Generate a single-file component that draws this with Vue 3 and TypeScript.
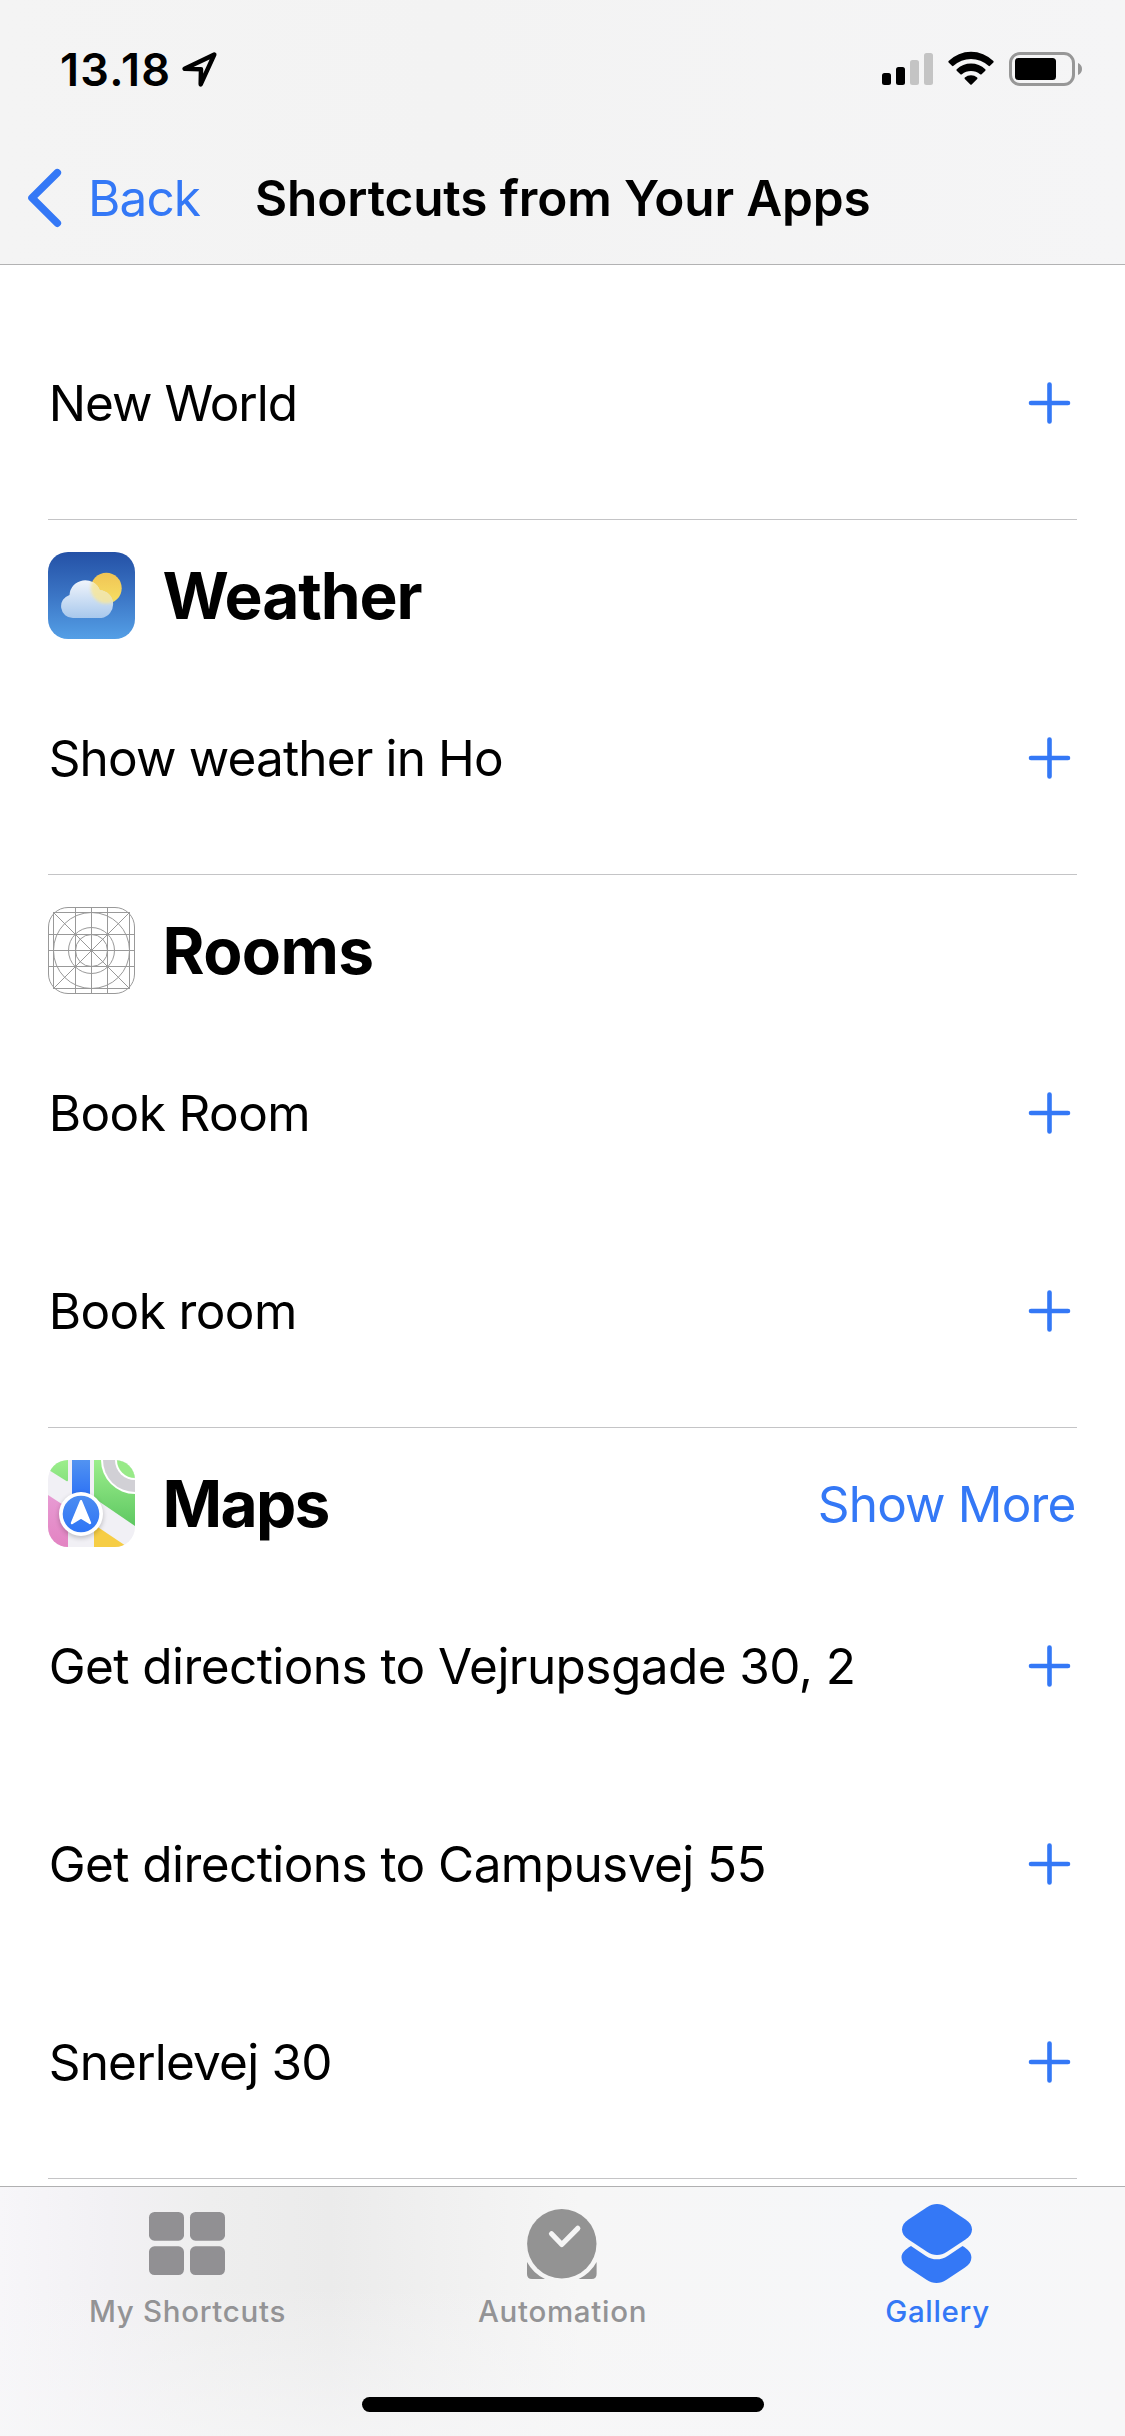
<script setup lang="ts">
interface Item {
  text: string
  /** letter-spacing in px */
  tracking: number
}

interface Section {
  app?: 'weather' | 'rooms' | 'maps'
  title?: string
  tracking?: number
  more?: boolean
  items: Item[]
}

const sections: Section[] = [
  { items: [{ text: 'New World', tracking: -1 }] },
  {
    app: 'weather',
    title: 'Weather',
    tracking: -1.1,
    items: [{ text: 'Show weather in Ho', tracking: -0.85 }],
  },
  {
    app: 'rooms',
    title: 'Rooms',
    tracking: -0.6,
    items: [
      { text: 'Book Room', tracking: -0.6 },
      { text: 'Book room', tracking: -0.6 },
    ],
  },
  {
    app: 'maps',
    title: 'Maps',
    tracking: -1.7,
    more: true,
    items: [
      { text: 'Get directions to Vejrupsgade 30, 2', tracking: -0.57 },
      { text: 'Get directions to Campusvej 55', tracking: -0.57 },
      { text: 'Snerlevej 30', tracking: -0.8 },
    ],
  },
]

const gridLines: number[] = [5.5, 27.5, 43.5, 59.5, 81.5]
</script>

<template>
  <div class="screen">
    <header class="top">
      <div class="status">
        <div class="clock">
          <span class="time">13.18</span>
          <svg class="loc" width="36" height="36" viewBox="0 0 36 36">
            <path d="M32.300 3.600 L2.600 17.700 L19 18.200 L18.700 33.400 Z" fill="none" stroke="#000" stroke-width="4.500" stroke-linejoin="round" />
          </svg>
        </div>
        <svg class="indicators" width="202" height="36" viewBox="0 0 202 36">
          <rect x="1" y="22" width="9" height="12" rx="2.5" />
          <rect x="15" y="16" width="9" height="18" rx="2.5" />
          <rect x="29" y="9" width="9" height="25" rx="2.5" fill="#c4c4c4" />
          <rect x="43" y="2" width="9" height="32" rx="2.5" fill="#c4c4c4" />
          <g transform="translate(67 1)">
            <path d="M0.6 9 Q0 9.800 0.600 10.400 L4 13.800 Q4.700 14.500 5.500 13.800 A25.600 25.600 0 0 1 40.500 13.800 Q41.300 14.500 42 13.800 L45.400 10.400 Q46 9.800 45.400 9 A32 32 0 0 0 0.600 9 Z" />
            <path d="M8.700 17.300 Q8.100 18 8.700 18.700 L12.400 22.200 Q13.100 22.800 13.900 22.200 A14.500 14.500 0 0 1 32.100 22.200 Q32.900 22.800 33.600 22.200 L37.300 18.700 Q37.900 18 37.300 17.300 A20.800 20.800 0 0 0 8.700 17.300 Z" />
            <path d="M16.800 25.500 Q16.200 26.200 16.800 26.900 L22.300 32.400 Q23 33 23.700 32.400 L29.200 26.900 Q29.800 26.200 29.200 25.500 A10 10 0 0 0 16.800 25.500 Z" />
          </g>
          <rect x="129.500" y="2.500" width="63" height="31" rx="9.500" fill="none" stroke="#979797" stroke-width="3" />
          <rect x="134" y="7" width="41" height="22" rx="3.500" />
          <path d="M197 12 C199.700 13.200 201 15.300 201 18 C201 20.700 199.700 22.800 197 24 Z" fill="#979797" />
        </svg>
      </div>
      <nav class="nav">
        <svg class="chevron" width="34" height="58" viewBox="0 0 34 58">
          <path d="M29.300 3.700 L4 28.900 L29.300 54.100" fill="none" stroke="#3478f6" stroke-width="7.600" stroke-linecap="round" stroke-linejoin="round" />
        </svg>
        <span class="back">Back</span>
        <h1 class="title">Shortcuts from Your Apps</h1>
      </nav>
    </header>

    <main class="list">
      <section v-for="(s, i) in sections" :key="i" class="section">
        <div v-if="s.title" class="head">
          <svg v-if="s.app === 'weather'" width="87" height="87" viewBox="0 0 87 87">
            <defs>
              <linearGradient id="sky" x1="0" y1="0" x2="0" y2="1">
                <stop offset="0" stop-color="#2451a6" />
                <stop offset="0.500" stop-color="#3b75c5" />
                <stop offset="1" stop-color="#549fe6" />
              </linearGradient>
              <linearGradient id="sun" x1="0" y1="0" x2="0" y2="1">
                <stop offset="0" stop-color="#f0c455" />
                <stop offset="1" stop-color="#f7e063" />
              </linearGradient>
              <linearGradient id="cloud" x1="0" y1="0" x2="0" y2="1">
                <stop offset="0" stop-color="#f3f6fc" />
                <stop offset="1" stop-color="#a6c7ec" />
              </linearGradient>
              <clipPath id="cloud-clip">
                <path d="M24.900 66 A11.800 11.800 0 0 1 21.500 42.900 A15.700 15.700 0 0 1 51.800 38.200 A14 14 0 0 1 53.400 66 Z" />
              </clipPath>
              <filter id="glow" x="-30%" y="-30%" width="160%" height="160%">
                <feGaussianBlur stdDeviation="1.600" />
              </filter>
            </defs>
            <rect width="87" height="87" rx="20" fill="url(#sky)" />
            <circle cx="58.300" cy="36.200" r="15.400" fill="url(#sun)" />
            <g clip-path="url(#cloud-clip)">
              <rect x="10" y="27" width="60" height="40" fill="url(#cloud)" />
              <circle cx="58.300" cy="36.200" r="15.400" fill="#f6e69a" opacity="0.850" filter="url(#glow)" />
            </g>
          </svg>
          <svg v-else-if="s.app === 'rooms'" width="87" height="87" viewBox="0 0 87 87" fill="none" stroke="#999">
            <rect x="0.500" y="0.500" width="86" height="86" rx="19.500" fill="#fff" />
            <path v-for="g in gridLines" :key="g" :d="`M${g} ${g === 5.5 || g === 81.5 ? 5 : 0} V${g === 5.5 || g === 81.5 ? 82 : 87} M${g === 5.5 || g === 81.5 ? 5 : 0} ${g} H${g === 5.5 || g === 81.5 ? 82 : 87}`" />
            <path d="M5.500 5.500 L81.500 81.500 M81.500 5.500 L5.500 81.500" />
            <circle cx="43.500" cy="43.500" r="38" />
            <circle cx="43.500" cy="43.500" r="23" />
            <circle cx="43.500" cy="43.500" r="16" />
          </svg>
          <svg v-else width="87" height="87" viewBox="0 0 87 87">
            <defs>
              <clipPath id="tile"><rect width="87" height="87" rx="20" /></clipPath>
              <linearGradient id="park" gradientUnits="userSpaceOnUse" x1="0" y1="0" x2="0" y2="64">
                <stop offset="0" stop-color="#9cee8c" />
                <stop offset="1" stop-color="#60c963" />
              </linearGradient>
              <linearGradient id="route" gradientUnits="userSpaceOnUse" x1="0" y1="0" x2="0" y2="34">
                <stop offset="0" stop-color="#5293f1" />
                <stop offset="1" stop-color="#2f74f5" />
              </linearGradient>
              <linearGradient id="puck" x1="0" y1="0" x2="0" y2="1">
                <stop offset="0" stop-color="#4c8df1" />
                <stop offset="1" stop-color="#2f75f6" />
              </linearGradient>
              <linearGradient id="pink" x1="0" y1="0" x2="0" y2="1">
                <stop offset="0" stop-color="#e79bd3" />
                <stop offset="1" stop-color="#e383c2" />
              </linearGradient>
              <filter id="soft" x="-40%" y="-40%" width="180%" height="180%">
                <feGaussianBlur stdDeviation="2.500" />
              </filter>
            </defs>
            <g clip-path="url(#tile)">
              <rect width="87" height="87" fill="#f1f0f5" />
              <path d="M0 0 H20 V20 Q20 21.800 18.400 20.900 L0 9.500 Z" fill="url(#park)" />
              <path d="M46 0 H87 V66 L46 38 Z" fill="url(#park)" />
              <circle cx="87" cy="0" r="34" fill="#fff" />
              <circle cx="87" cy="0" r="32" fill="#d1d0d5" />
              <circle cx="87" cy="0" r="20" fill="#fff" />
              <circle cx="87" cy="0" r="18" fill="#98ea88" />
              <path d="M0 35 L20 48 V87 H0 Z" fill="url(#pink)" />
              <path d="M46 64.500 L79.500 87 H46 Z" fill="#f6cd45" />
              <rect x="24" width="18" height="40" fill="url(#route)" />
              <circle cx="33" cy="56" r="22" fill="#000" opacity="0.220" filter="url(#soft)" />
              <circle cx="33" cy="54" r="22" fill="#fff" />
              <circle cx="33" cy="54" r="18.300" fill="url(#puck)" />
              <path d="M33 41.200 L42 63 L33 57.400 L24 63 Z" fill="#fff" stroke="#fff" stroke-width="2.400" stroke-linejoin="round" />
            </g>
          </svg>
          <h2 class="app-name" :style="{ letterSpacing: `${s.tracking}px` }">{{ s.title }}</h2>
          <span v-if="s.more" class="more">Show More</span>
        </div>
        <div v-for="item in s.items" :key="item.text" class="row">
          <span class="label" :style="{ letterSpacing: `${item.tracking}px` }">{{ item.text }}</span>
          <svg class="plus" width="43" height="42" viewBox="0 0 43 42">
            <path d="M21.500 2.500 V39.500 M3 21 H40" stroke="#3478f6" stroke-width="4.600" stroke-linecap="round" />
          </svg>
        </div>
      </section>
      <div class="rule"></div>
    </main>

    <footer class="tabs">
      <div class="tab-row">
        <div class="tab">
          <svg width="77" height="80" viewBox="0 0 77 80" fill="#919093">
            <rect x="0" y="8" width="35" height="28.700" rx="5.500" />
            <rect x="41" y="8" width="35" height="28.700" rx="5.500" />
            <rect x="0" y="42.300" width="35" height="28.700" rx="5.500" />
            <rect x="41" y="42.300" width="35" height="28.700" rx="5.500" />
          </svg>
          <span class="tab-label">My Shortcuts</span>
        </div>
        <div class="tab">
          <svg width="71" height="80" viewBox="0 0 71 80" fill="#939393">
            <circle cx="34.800" cy="39.700" r="34.700" />
            <path d="M0 58 V70 Q0 75 5 75 H18 A39.500 39.500 0 0 1 0 58 Z" />
            <path d="M69.600 58 V70 Q69.600 75 64.600 75 H51.600 A39.500 39.500 0 0 0 69.600 58 Z" />
            <path d="M24.500 29.800 L34.800 40.500 L50.800 24.300" fill="none" stroke="#f5f5f5" stroke-width="5.200" stroke-linecap="round" stroke-linejoin="round" />
          </svg>
          <span class="tab-label">Automation</span>
        </div>
        <div class="tab active">
          <svg width="71" height="80" viewBox="0 0 71 80" fill="#3478f6">
            <path d="M45 3.300 L63.500 15.500 C67.800 18.400 70 21.500 70 25.500 C70 29.500 67.800 32.600 63.500 35.500 L45 47.700 C41.500 50 38.500 51 35 51 C31.500 51 28.500 50 25 47.700 L6.500 35.500 C2.200 32.600 0 29.500 0 25.500 C0 21.500 2.200 18.400 6.500 15.500 L25 3.300 C28.500 1 31.500 0 35 0 C38.500 0 41.500 1 45 3.300 Z" />
            <path d="M9 42 L23.500 51.700 C27.500 54.300 31 55.300 34.800 55.300 C38.600 55.300 42 54.300 46 51.700 L60.500 42 C66.500 45.500 69.400 49 69.400 53.500 C69.400 57.500 67.300 60.600 63 63.500 L44.500 75.700 C41 78 38 79 34.500 79 C31 79 28 78 24.500 75.700 L6 63.500 C1.700 60.600 -0.500 57.500 -0.500 53.500 C-0.500 49 3 45.500 9 42 Z" />
          </svg>
          <span class="tab-label">Gallery</span>
        </div>
      </div>
      <div class="home"></div>
    </footer>
  </div>
</template>

<style>
body {
  margin: 0;
  background: #fff;
}
</style>

<style scoped>
.screen {
  width: 1125px;
  height: 2436px;
  display: flex;
  flex-direction: column;
  overflow: hidden;
  background: #fff;
  color: #000;
  font-family: Inter, "Liberation Sans", sans-serif;
  white-space: nowrap;
}
svg {
  display: block;
  flex: none;
  overflow: visible;
}
.top {
  box-sizing: border-box;
  height: 265px;
  flex: none;
  display: flex;
  flex-direction: column;
  background: linear-gradient(90deg, #f4f4f4, #f3f3f3 40%, #f5f5f6);
  border-bottom: 1px solid #b2b2b3;
}
.status {
  height: 132px;
  box-sizing: border-box;
  padding: 6px 42px 0 60px;
  display: flex;
  align-items: center;
  justify-content: space-between;
}
.clock {
  display: flex;
  align-items: center;
}
.time {
  width: 122px;
  font-size: 45px;
  font-weight: 600;
  letter-spacing: 1.300px;
}
.nav {
  height: 132px;
  display: flex;
  align-items: center;
  padding-left: 28px;
}
.back {
  margin-left: 26px;
  width: 167px;
  font-size: 49.500px;
  letter-spacing: -0.900px;
  color: #3478f6;
}
.title {
  margin: 0;
  font-size: 49.500px;
  font-weight: 600;
  letter-spacing: -0.140px;
}
.list {
  flex: 1;
  padding: 56px 48px 0;
}
.section + .section {
  border-top: 1px solid #c4c4c6;
}
.head {
  box-sizing: border-box;
  height: 156px;
  padding: 0 1.500px 5px 0;
  display: flex;
  align-items: center;
}
.app-name {
  flex: 1;
  margin: 0 0 0 27.500px;
  font-size: 64px;
  font-weight: 700;
}
.more {
  font-size: 49.500px;
  letter-spacing: -0.850px;
  color: #3478f6;
}
.row {
  box-sizing: border-box;
  height: 198px;
  padding: 0 6px 35px 0.700px;
  display: flex;
  align-items: center;
  justify-content: space-between;
}
.label {
  font-size: 49.500px;
}
.rule {
  height: 1px;
  background: #c4c4c6;
}
.tabs {
  box-sizing: border-box;
  height: 250px;
  flex: none;
  border-top: 1px solid #b0b0b1;
  background:
    linear-gradient(180deg, rgba(247, 247, 248, 0) 40%, rgba(247, 247, 248, 0.700)),
    linear-gradient(90deg, #f7f6f9 0, #f2f1f4 110px, #eeeeee 210px, #ebebeb 330px, #f0f0f0 440px, #f6f6f6 580px, #f6f7f9 900px, #f7f7f8 100%);
}
.tab-row {
  display: flex;
  height: 210px;
}
.tab {
  flex: 1;
  display: flex;
  flex-direction: column;
  align-items: center;
  padding-top: 17px;
  color: #939395;
}
.tab.active {
  color: #3478f6;
}
.tab-label {
  margin-top: 9px;
  font-size: 29.500px;
  line-height: 36px;
  font-weight: 500;
  letter-spacing: 0.700px;
}
.home {
  width: 402px;
  height: 15px;
  margin: 0 auto;
  border-radius: 8px;
  background: #000;
}
</style>
